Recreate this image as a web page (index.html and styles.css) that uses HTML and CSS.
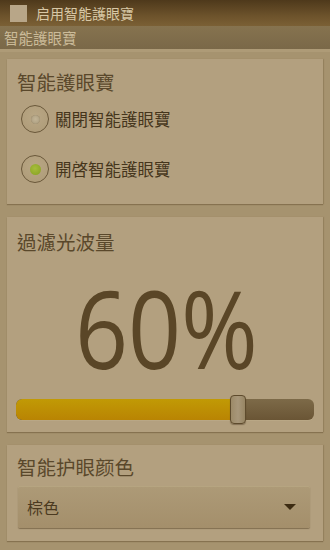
FILE: index.html
```html
<!DOCTYPE html>
<html>
<head>
<meta charset="utf-8">
<link rel="stylesheet" href="styles.css">
</head>
<body>
<div class="topbar">
  <span class="check"></span>
  <span class="top-title">启用智能護眼寶</span>
</div>
<div class="section-head">智能護眼寶</div>
<div class="content">
  <div class="card card-mode">
    <div class="card-title">智能護眼寶</div>
    <div class="radio-row">
      <span class="radio"><span class="dot off"></span></span>
      <span class="radio-label">關閉智能護眼寶</span>
    </div>
    <div class="radio-row">
      <span class="radio"><span class="dot on"></span></span>
      <span class="radio-label">開啓智能護眼寶</span>
    </div>
  </div>
  <div class="card card-filter">
    <div class="card-title">過濾光波量</div>
    <div class="big-value"><span class="big-inner">60%</span></div>
    <div class="slider">
      <div class="track">
        <div class="fill" style="width: 73%"></div>
      </div>
      <div class="thumb" style="left: 213px"></div>
    </div>
  </div>
  <div class="card card-color">
    <div class="card-title">智能护眼颜色</div>
    <div class="select">
      <span class="select-text">棕色</span>
      <span class="arrow"></span>
    </div>
  </div>
</div>
</body>
</html>
```

FILE: styles.css
```css
html, body {
  margin: 0;
  padding: 0;
}
body {
  width: 330px;
  height: 550px;
  overflow: hidden;
  background: #a6936f;
  font-family: "Noto Sans CJK TC", "Noto Sans CJK SC", "Noto Sans", sans-serif;
}
.topbar {
  height: 26px;
  background: linear-gradient(#4e391b, #6c522b 60%, #7b6035);
  display: flex;
  align-items: center;
  padding-left: 10px;
  box-sizing: border-box;
}
.check {
  width: 17px;
  height: 17px;
  background: #b8a688;
  display: block;
}
.top-title {
  margin-left: 9px;
  color: #d8c8a6;
  font-size: 14px;
  line-height: 26px;
}
.section-head {
  height: 26px;
  box-sizing: border-box;
  background: linear-gradient(#86734f, #7a6848);
  color: #cbbb99;
  font-size: 14.5px;
  line-height: 23px;
  padding-left: 4px;
  border-bottom: 3px solid #ae9b77;
}
.content {
  padding: 7px 7px 0 7px;
  display: flex;
  flex-direction: column;
  gap: 13px;
}
.card {
  background: #b3a07f;
  box-shadow: 0 1px 1px rgba(80, 60, 30, 0.35), 1px 0 1px rgba(80,60,30,0.15);
  box-sizing: border-box;
  padding: 0 10px;
}
.card-title {
  color: #5a482b;
  font-size: 19.5px;
  line-height: 24px;
}
.card-mode {
  height: 145px;
  padding-top: 11px;
}
.radio-row {
  display: flex;
  align-items: center;
  height: 28px;
  margin-left: 4px;
}
.radio-row + .radio-row {
  margin-top: 22px;
}
.card-mode .card-title + .radio-row {
  margin-top: 11px;
}
.radio {
  width: 28px;
  height: 28px;
  box-sizing: border-box;
  border: 1.5px solid #6a583a;
  border-radius: 50%;
  background: radial-gradient(circle at 50% 40%, #b9a785, #ad9a77);
  display: flex;
  align-items: center;
  justify-content: center;
}
.dot {
  width: 10px;
  height: 10px;
  border-radius: 50%;
}
.dot.off {
  width: 9px;
  height: 9px;
  background: radial-gradient(circle at 50% 45%, #c2b496, #a89a7c);
  box-shadow: inset 0 0 1px #8a7a5c;
}
.dot.on {
  width: 11px;
  height: 11px;
  background: radial-gradient(circle at 45% 40%, #a6bd3b, #86a021);
}
.radio-label {
  margin-left: 6px;
  color: #45351b;
  font-size: 16.5px;
  line-height: 20px;
}
.card-filter {
  height: 215px;
  padding-top: 13px;
}
.big-value {
  height: 130px;
  display: flex;
  justify-content: center;
  align-items: center;
  margin-top: 9px;
}
.big-inner {
  font-family: "Open Sans", "Noto Sans", sans-serif;
  font-size: 108px;
  line-height: 130px;
  color: #5a4627;
  transform: scaleX(0.86);
  margin-left: 3px;
}
.slider {
  position: relative;
  height: 30px;
  margin-top: 2px;
}
.track {
  position: absolute;
  left: -1px;
  right: -1px;
  top: 4px;
  height: 21px;
  border-radius: 6px;
  background: linear-gradient(#7d6a48, #6a5535);
  overflow: hidden;
  box-shadow: 0 1px 0 rgba(200,185,150,0.3);
}
.fill {
  height: 100%;
  background: linear-gradient(#c19a05, #b98403);
  border-radius: 6px 0 0 6px;
}
.thumb {
  position: absolute;
  top: 0;
  width: 16px;
  height: 29px;
  box-sizing: border-box;
  border: 1px solid #5e4b2d;
  border-radius: 4px;
  background: linear-gradient(90deg, #9c8a68, #a8977a 50%, #978563);
  box-shadow: 0 1px 1px rgba(60,40,20,0.4);
}
.card-color {
  height: 96px;
  padding-top: 10px;
}
.select {
  margin-top: 7px;
  margin-left: 1px;
  height: 42px;
  width: 292px;
  box-sizing: border-box;
  background: linear-gradient(#ad9a77, #a48f6b);
  border-radius: 2px;
  box-shadow: 0 1px 1px rgba(70,50,25,0.45), inset 0 1px 0 rgba(200,185,150,0.35);
  display: flex;
  align-items: center;
  justify-content: space-between;
  padding: 0 14px 0 9px;
}
.select-text {
  color: #4b3a20;
  font-size: 16px;
}
.arrow {
  width: 0;
  height: 0;
  border-left: 6px solid transparent;
  border-right: 6px solid transparent;
  border-top: 6px solid #3d2c12;
}
```
